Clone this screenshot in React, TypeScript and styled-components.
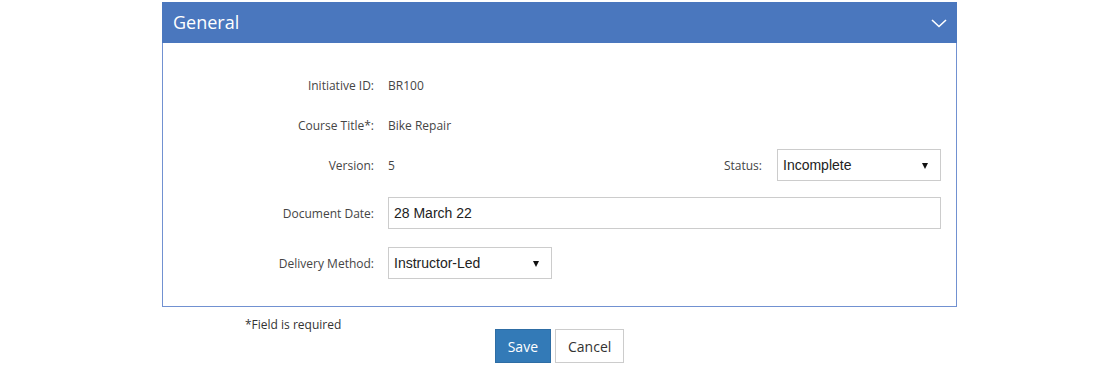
import React from "react";
import styled, { createGlobalStyle } from "styled-components";

const Global = createGlobalStyle`
  html, body { margin: 0; padding: 0; background: #fff; }
  body { font-family: "Open Sans", "Liberation Sans", sans-serif; color: #333; }
  * { box-sizing: border-box; }
`;

const Page = styled.div`
  width: 1120px;
  padding: 2px 1px 0 0;
  display: flex;
  flex-direction: column;
  align-items: center;
`;

const Panel = styled.section`
  width: 795px;
  border: 1px solid #7191d1;
  border-top: none;
  background: #fff;
`;

const Header = styled.div`
  height: 41px;
  background: #4a77be;
  margin: 0 -1px;
  display: flex;
  align-items: center;
  justify-content: space-between;
  padding: 0 10px 0 11px;
`;

const Title = styled.h2`
  margin: 0 0 1px;
  font-family: "Open Sans", sans-serif;
  font-weight: 400;
  font-size: 18px;
  color: #fff;
  line-height: 24px;
`;

const Body = styled.div`
  padding: 26px 15px 27px 0;
  display: flex;
  flex-direction: column;
`;

const Row = styled.div<{ $mb?: number }>`
  display: flex;
  align-items: center;
  height: 32px;
  margin-bottom: ${(p) => p.$mb ?? 0}px;
`;

const Label = styled.label`
  width: 225px;
  padding-right: 14px;
  text-align: right;
  font-size: 12px;
  color: #454545;
  flex: none;
`;

const Value = styled.div`
  flex: 1;
  font-size: 12px;
  color: #454545;
`;

const SideLabel = styled.label`
  font-size: 12px;
  color: #454545;
  margin-right: 15px;
`;

const Field = styled.div<{ $w?: number }>`
  height: 32px;
  ${(p) => (p.$w ? `width: ${p.$w}px; flex: none;` : "flex: 1;")}
  border: 1px solid #ccc;
  display: flex;
  align-items: center;
  justify-content: space-between;
  padding: 0 12px 0 5px;
  font-family: "Liberation Sans", Arial, sans-serif;
  font-size: 14px;
  color: #222;
  background: #fff;
`;

const Arrow = styled.span`
  width: 0;
  height: 0;
  border-left: 3.5px solid transparent;
  border-right: 3.5px solid transparent;
  border-top: 6px solid #111;
  margin-top: 1px;
`;

const Footer = styled.div`
  width: 795px;
  display: flex;
  flex-direction: column;
`;

const Note = styled.div`
  margin: 11px 0 0 83px;
  font-size: 12px;
  line-height: 14px;
  color: #333;
`;

const Buttons = styled.div`
  margin-top: -3px;
  display: flex;
  justify-content: center;
  gap: 4px;
`;

const Button = styled.button<{ $primary?: boolean }>`
  height: 34px;
  padding: 0 12px;
  font-family: "Open Sans", sans-serif;
  font-size: 14px;
  border: 1px solid ${(p) => (p.$primary ? "#2e6da4" : "#ccc")};
  background: ${(p) => (p.$primary ? "#337ab7" : "#fff")};
  color: ${(p) => (p.$primary ? "#fff" : "#333")};
  cursor: pointer;
`;

export default function App() {
  return (
    <Page>
      <Global />
      <Panel>
        <Header>
          <Title>General</Title>
          <svg width="16" height="10" viewBox="0 0 16 10">
            <path d="M1 2 L8 8.5 L15 2" fill="none" stroke="#fff" strokeWidth="1.6" />
          </svg>
        </Header>
        <Body>
          <Row $mb={8}>
            <Label>Initiative ID:</Label>
            <Value>BR100</Value>
          </Row>
          <Row $mb={8}>
            <Label>Course Title*:</Label>
            <Value>Bike Repair</Value>
          </Row>
          <Row $mb={16}>
            <Label>Version:</Label>
            <Value>5</Value>
            <SideLabel>Status:</SideLabel>
            <Field $w={164}>
              <span>Incomplete</span>
              <Arrow />
            </Field>
          </Row>
          <Row $mb={18}>
            <Label>Document Date:</Label>
            <Field>28 March 22</Field>
          </Row>
          <Row>
            <Label>Delivery Method:</Label>
            <Field $w={164}>
              <span>Instructor-Led</span>
              <Arrow />
            </Field>
          </Row>
        </Body>
      </Panel>
      <Footer>
        <Note>*Field is required</Note>
        <Buttons>
          <Button $primary>Save</Button>
          <Button>Cancel</Button>
        </Buttons>
      </Footer>
    </Page>
  );
}
